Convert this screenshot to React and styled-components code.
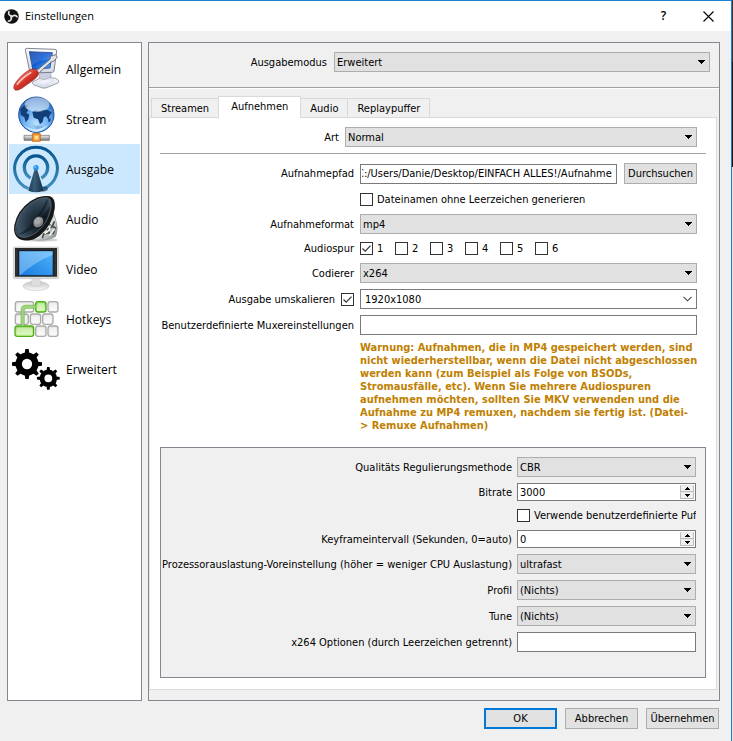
import { useEffect, useRef, useState } from "react";
import styled, { createGlobalStyle, css } from "styled-components";

const GlobalStyle = createGlobalStyle`
  * {
    box-sizing: border-box;
  }

  body {
    margin: 0;
    background: linear-gradient(#33383d 0 62px, #17191c 62px 167px, #e3e3e3 167px);
    color: #000;
    font: 11px/13px "DejaVu Sans Condensed", "DejaVu Sans", sans-serif;
  }

  button,
  input,
  select {
    margin: 0;
    border-radius: 0;
    color: inherit;
    font: inherit;
  }
`;

const Window = styled.div`
  display: flex;
  flex-direction: column;
  min-height: 100vh;
  margin-right: 1px;
  border-top: 1px solid #1c80d0;
  border-right: 1px solid #1c80d0;
  background: #f0f0f0;
`;

const TitleBar = styled.header`
  display: flex;
  align-items: center;
  height: 30px;
  padding-left: 4px;
  background: #fff;
`;

const Title = styled.h1`
  flex: 1;
  margin: 0 0 0 6px;
  font: 11px/16px "Open Sans", sans-serif;
`;

const TitleButton = styled.button`
  display: grid;
  place-items: center;
  width: 45px;
  height: 30px;
  padding: 0;
  border: 0;
  background: none;
  font: 600 12px/16px "Open Sans", sans-serif;
`;

const Body = styled.div`
  display: flex;
  flex: 1;
  gap: 6px;
  padding: 11px 11px 0 7px;
`;

const Sidebar = styled.nav`
  flex: 0 0 135px;
  padding: 1px;
  border: 1px solid #828790;
  background: #fff;
`;

const SidebarItem = styled.button`
  display: flex;
  align-items: center;
  gap: 6px;
  width: 100%;
  height: 50px;
  padding: 0 3px;
  border: 0;
  background: ${(props) => (props.$active ? "#cce8ff" : "none")};
  font: 12px/16px "Open Sans", sans-serif;
  text-align: left;

  svg {
    flex: none;
    width: 48px;
    height: 48px;
  }
`;

const SidebarText = styled.span`
  padding-top: 2px;
`;

const Content = styled.main`
  display: flex;
  flex: 1;
  flex-direction: column;
  min-width: 0;
  padding-bottom: 10px;
  border: 1px solid #828790;
`;

const ModeRow = styled.div`
  display: grid;
  grid-template-columns: 178px 1fr;
  align-items: center;
  gap: 7px;
  padding: 9px 9px 15px 0;
  border-bottom: 1px solid #a0a0a0;
  box-shadow: 0 1px #fff;
`;

const Tabs = styled.div`
  display: flex;
  align-items: flex-end;
  padding: 8px 0 0 2px;
`;

const Tab = styled.button`
  height: 19px;
  margin-left: -1px;
  padding: 0 9px;
  border: 1px solid #d9d9d9;
  border-bottom: 0;
  background: #f0f0f0;

  &:first-child {
    margin-left: 0;
  }

  ${(props) =>
    props.$active &&
    css`
      z-index: 1;
      height: 22px;
      margin-bottom: -1px;
      padding: 0 12px 2px;
      background: #fff;
    `}
`;

const Panel = styled.section`
  flex: 1;
  margin-right: 2px;
  padding: 9px 10px 11px;
  border: 1px solid #d9d9d9;
  border-left-color: #e4e4e4;
  background: #fff;
`;

const ArtRow = styled.div`
  display: grid;
  grid-template-columns: 179px 1fr;
  align-items: center;
  gap: 6px;
  margin-right: 9px;
  padding-bottom: 6px;
`;

const Divider = styled.hr`
  height: 1px;
  margin: 0;
  border: 0;
  background: #a0a0a0;
`;

const Form = styled.div`
  display: grid;
  grid-template-columns: 194px 1fr;
  gap: 6px;
  padding: 9px 9px 15px 0;
`;

const EncoderBox = styled.div`
  display: grid;
  grid-template-columns: 350px minmax(0, 1fr);
  gap: 6px 5px;
  padding: 9px 9px 25px 1px;
  border: 1px solid #828790;
  background: #f0f0f0;
`;

const Label = styled.label`
  align-self: center;
  text-align: right;
  white-space: nowrap;
`;

const LabelGroup = styled.div`
  display: flex;
  align-items: center;
  justify-content: flex-end;
  gap: 6px;
`;

const Field = styled.div`
  display: flex;
  grid-column: 2;
  align-items: center;
  gap: ${(props) => props.$gap || 7}px;
  min-width: 0;
  height: ${(props) => props.$height || 20}px;
  overflow: hidden;
`;

const TextInput = styled.input`
  flex: 1;
  width: 100%;
  min-width: 0;
  height: 20px;
  padding: 0 4px 0 1px;
  border: 1px solid #7a7a7a;
  background: #fff;
  outline: none;
`;

const SelectFrame = styled.div`
  display: grid;
  align-items: center;
  min-width: 0;

  > * {
    grid-area: 1 / 1;
  }

  > svg {
    justify-self: end;
    margin-right: 5px;
    pointer-events: none;
  }
`;

const NativeSelect = styled.select`
  width: 100%;
  height: 20px;
  padding: 0 20px 0 ${(props) => (props.$editable ? 4 : 2)}px;
  border: 1px solid ${(props) => (props.$editable ? "#7a7a7a" : "#adadad")};
  background: ${(props) => (props.$editable ? "#fff" : "#e1e1e1")};
  appearance: none;
  outline: none;
`;

const CheckFrame = styled.span`
  display: inline-grid;
  flex: none;
  width: 13px;
  height: 13px;

  > * {
    grid-area: 1 / 1;
  }

  svg {
    visibility: hidden;
    pointer-events: none;
  }

  input:checked + svg {
    visibility: visible;
  }
`;

const CheckInput = styled.input`
  width: 13px;
  height: 13px;
  border: 1px solid #333;
  background: #fff;
  appearance: none;
`;

const CheckLabel = styled.label`
  display: flex;
  flex: none;
  align-items: center;
  gap: 4px;
  min-width: ${(props) => props.$width || 0}px;
  white-space: nowrap;
`;

const Button = styled.button`
  min-width: 73px;
  height: 21px;
  padding: 0 3px;
  border: ${(props) => (props.$primary ? "2px solid #0078d7" : "1px solid #adadad")};
  background: #e1e1e1;
  white-space: nowrap;
`;

const SpinFrame = styled.div`
  display: flex;
  align-items: center;
  height: 18px;
  padding-right: 1px;
  border: 1px solid #7a7a7a;
  background: #fff;
`;

const SpinInput = styled.input`
  flex: 1;
  min-width: 0;
  height: 16px;
  padding: 0 2px;
  border: 0;
  background: none;
  outline: none;
  appearance: textfield;

  &::-webkit-inner-spin-button {
    display: none;
  }
`;

const SpinButtons = styled.div`
  display: flex;
  flex-direction: column;
`;

const SpinButton = styled.button`
  display: grid;
  place-items: center;
  width: 14px;
  height: 7px;
  padding: 0;
  border: 1px solid #bcbcbc;
  border-top-color: #e8e8e8;
  background: #f0f0f0;
`;

const Warning = styled.p`
  grid-column: 2;
  margin: 0 -4px 0 0;
  color: #c08000;
  font-weight: bold;
`;

const Footer = styled.footer`
  display: flex;
  justify-content: flex-end;
  gap: 8px;
  padding: 7px 12px 12px;
`;

const LogoIcon = () => (
  <svg width="15" height="15" viewBox="0 0 30 30" aria-hidden="true">
    <circle cx="15" cy="15" r="14.5" fill="#111" />
    <g fill="none" stroke="#e6e6e6" strokeWidth="3.2" strokeLinecap="round">
      <path d="M10 5c-2 4 0 8 5 9" />
      <path d="M10 5c-2 4 0 8 5 9" transform="rotate(120 15 15)" />
      <path d="M10 5c-2 4 0 8 5 9" transform="rotate(240 15 15)" />
    </g>
    <circle cx="15" cy="15" r="2" fill="#e6e6e6" />
  </svg>
);

const CloseIcon = () => (
  <svg width="11" height="11" viewBox="0 0 11 11" aria-hidden="true">
    <path d="M.5.5l10 10M10.5.5l-10 10" stroke="#000" strokeWidth="1.1" />
  </svg>
);

const ArrowIcon = () => (
  <svg width="7" height="4" viewBox="0 0 7 4" shapeRendering="crispEdges" aria-hidden="true">
    <path d="M0 0h7v1H6v1H5v1H4v1H3V3H2V2H1V1H0z" />
  </svg>
);

const ChevronIcon = () => (
  <svg width="9" height="6" viewBox="0 0 9 6" aria-hidden="true">
    <path d="M.5.8l4 4 4-4" fill="none" stroke="#444" strokeWidth="1.1" />
  </svg>
);

const CheckIcon = () => (
  <svg width="13" height="13" viewBox="0 0 13 13" aria-hidden="true">
    <path d="M2.5 6.5l2.7 2.7 5.3-5.6" fill="none" stroke="#333" strokeWidth="1.2" />
  </svg>
);

const SpinArrow = ({ down }) => (
  <svg width="5" height="3" viewBox="0 0 5 3" shapeRendering="crispEdges" aria-hidden="true">
    <path d={down ? "M0 0h5v1H4v1H3v1H2V2H1V1H0z" : "M2 0h1v1h1v1h1v1H0V2h1V1h1z"} />
  </svg>
);

const GeneralIcon = () => (
  <svg viewBox="0 0 144 144" aria-hidden="true">
    <defs>
      <linearGradient id="gen-screen" x1="0" y1="0" x2="1" y2="1">
        <stop offset="0" stopColor="#0b3fa6" />
        <stop offset=".45" stopColor="#0a55cf" />
        <stop offset="1" stopColor="#57b3f7" />
      </linearGradient>
      <linearGradient id="gen-case" x1="0" y1="0" x2="0" y2="1">
        <stop offset="0" stopColor="#fafbff" />
        <stop offset="1" stopColor="#d3d8e4" />
      </linearGradient>
      <linearGradient id="gen-handle" x1="0" y1="0" x2="1" y2="1">
        <stop offset=".2" stopColor="#f58a80" />
        <stop offset=".5" stopColor="#d3352b" />
        <stop offset="1" stopColor="#8e100c" />
      </linearGradient>
    </defs>
    <path d="M62 110l30-14 38 4q14 5 8 14l-34 14q-8 3-16 0l-24-9q-6-4-2-9z" fill="url(#gen-case)" stroke="#777c88" strokeWidth="2" />
    <path d="M70 113l26-11 30 4-28 14z" fill="#eef1fa" stroke="#c3c9d8" />
    <path d="M84 78l30-2 4 20-22 8-14-4z" fill="#c9cfde" stroke="#8b909e" strokeWidth="1.5" />
    <path d="M40 15q0-5 5-5l83 3q6 0 6 5l-8 60q-1 4-5 4l-62 2q-5 0-6-5z" fill="url(#gen-case)" stroke="#686d7b" strokeWidth="2.5" />
    <path d="M52 20l69 3-7 46-52 4z" fill="url(#gen-screen)" stroke="#0a2c72" strokeWidth="2" />
    <path d="M53 21l67 3-3 18q-35 2-58 20z" fill="#fff" opacity=".15" />
    <path d="M70 80l44-37 2-9 14-5 6 7-10 12-9 3-41 37z" fill="#e0e3e9" stroke="#5e626d" strokeWidth="2.5" />
    <path d="M8 118q-6 12 2 17 9 2 19-5l38-27q9-8 12-14l-1-8q-4-9-12-9l-12 2q-28 15-46 44z" fill="url(#gen-handle)" stroke="#8d1712" strokeWidth="2" />
    <path d="M16 117q18-22 40-34" fill="none" stroke="#ffc3ba" strokeWidth="5" strokeLinecap="round" />
  </svg>
);

const StreamIcon = () => (
  <svg viewBox="0 0 144 144" aria-hidden="true">
    <defs>
      <radialGradient id="str-globe" cx=".5" cy=".75" r=".75">
        <stop offset="0" stopColor="#b9e0ff" />
        <stop offset=".5" stopColor="#68acef" />
        <stop offset="1" stopColor="#1c5cb4" />
      </radialGradient>
      <linearGradient id="str-pipe" x1="0" y1="0" x2="0" y2="1">
        <stop offset="0" stopColor="#f4f4f4" />
        <stop offset="1" stopColor="#777" />
      </linearGradient>
    </defs>
    <path d="M66 100h16v22H66z" fill="#b9b9b9" stroke="#777" />
    <path d="M36 121h76v15H36z" fill="url(#str-pipe)" stroke="#666" strokeWidth="2" />
    <path d="M61 116h24v23H61z" fill="#f59b33" stroke="#b75b0a" strokeWidth="2" />
    <path d="M68 122h11v11H68z" fill="#ffe59a" />
    <circle cx="73" cy="59" r="53" fill="url(#str-globe)" stroke="#184f9d" strokeWidth="3" />
    <g fill="#113f79">
      <path d="M25 41l14-12 9 1-5 9 6 6-6 8 9 6-3 14-8 9-4-15-11-8z" />
      <path d="M61 51l8-5 15 3 9-5 14 1 13 8-7 7-3 14-8-10-7 3-3 14-8 7-6-15-13-5z" />
      <path d="M109 72l7-2-1 9-6 3z" />
      <path d="M60 90l10 3 17-1 6 4-18 7z" opacity=".2" />
    </g>
    <ellipse cx="75" cy="29" rx="37" ry="22" fill="#fff" opacity=".5" />
    <path d="M36 89q37 29 74-1-37 45-74 1z" fill="#e2f4ff" opacity=".8" />
  </svg>
);

const OutputIcon = () => (
  <svg viewBox="0 0 144 144" aria-hidden="true">
    <defs>
      <linearGradient id="out-ring" x1="0" y1="0" x2="0" y2="1">
        <stop offset="0" stopColor="#07558f" />
        <stop offset="1" stopColor="#438fbd" />
      </linearGradient>
      <linearGradient id="out-cone" x1="0" y1="0" x2="1" y2="0">
        <stop offset="0" stopColor="#1c3a53" />
        <stop offset=".4" stopColor="#385c78" />
        <stop offset="1" stopColor="#142f45" />
      </linearGradient>
    </defs>
    <g fill="none" stroke="url(#out-ring)">
      <path d="M50 131A64 64 0 1 1 94 131" strokeWidth="9" />
      <path d="M56 99A35 35 0 1 1 88 99" strokeWidth="10" />
    </g>
    <path d="M89 125q18-2 19 6 0 7-17 9z" fill="#173e59" opacity=".7" />
    <path d="M67 75h9l19 62q-24 9-46 0z" fill="url(#out-cone)" />
    <circle cx="72" cy="68" r="8" fill="#2593e8" />
    <circle cx="70" cy="66" r="3" fill="#70c5ff" />
  </svg>
);

const AudioIcon = () => (
  <svg viewBox="0 0 144 144" aria-hidden="true">
    <defs>
      <linearGradient id="aud-metal" x1="0" y1="0" x2="1" y2="1">
        <stop offset="0" stopColor="#444" />
        <stop offset=".55" stopColor="#e3e6e6" />
        <stop offset="1" stopColor="#7b8080" />
      </linearGradient>
      <radialGradient id="aud-cone" cx=".7" cy=".65" r=".8">
        <stop offset="0" stopColor="#0b1219" />
        <stop offset=".45" stopColor="#263744" />
        <stop offset=".8" stopColor="#3d5365" />
        <stop offset="1" stopColor="#16212a" />
      </radialGradient>
    </defs>
    <ellipse cx="87" cy="135" rx="50" ry="5" fill="#777" opacity=".35" />
    <path d="M124 53l9 29q6 20-2 42-26 17-76 9l40-42z" fill="url(#aud-metal)" stroke="#858989" strokeWidth="2" />
    <path d="M112 88l7 8-13 7 6 11-17 3-4 13M127 79l-6 15 9 5-7 19" fill="none" stroke="#45504e" strokeWidth="5" />
    <path d="M115 91l-4 15-13 10M129 101l-17 21" fill="none" stroke="#fff" strokeWidth="4" />
    <path d="M108 3q24 1 20 39-7 49-45 80-30 22-60 11Q2 121 7 91 15 47 55 19 80 2 108 3z" fill="#151719" />
    <path d="M106 8q16 4 10 36-9 40-41 67-30 22-50 14Q7 121 12 91 21 49 57 24 82 7 106 8z" fill="url(#aud-cone)" stroke="#667078" strokeWidth="2" />
    <path d="M105 12q11 9-26 57 14-3 35-35-4 36-29 61l-15 2Q39 120 20 118 73 86 105 12z" fill="#050b12" opacity=".4" />
    <ellipse cx="79" cy="81" rx="14" ry="17" fill="#858789" transform="rotate(35 79 81)" />
    <ellipse cx="77" cy="78" rx="9" ry="12" fill="#a7a7a7" transform="rotate(35 77 78)" />
  </svg>
);

const VideoIcon = () => (
  <svg viewBox="0 0 144 144" aria-hidden="true">
    <defs>
      <linearGradient id="vid-screen" x1="1" y1="0" x2="0" y2="1">
        <stop offset="0" stopColor="#4fb4f6" />
        <stop offset="1" stopColor="#1979e0" />
      </linearGradient>
      <linearGradient id="vid-stand" x1="0" y1="0" x2="0" y2="1">
        <stop offset="0" stopColor="#c6c6c6" />
        <stop offset="1" stopColor="#f8f8f8" />
      </linearGradient>
    </defs>
    <ellipse cx="72" cy="123" rx="39" ry="14" fill="url(#vid-stand)" stroke="#ccc" strokeWidth="2" />
    <path d="M60 100h24l3 21q-15 6-30 0z" fill="#dedede" stroke="#bbb" />
    <path d="M7 6h130q3 0 3 4v87q0 4-4 4H8q-4 0-4-4V10q0-4 3-4z" fill="#d8d8d8" stroke="#c7c7c7" strokeWidth="2" />
    <path d="M9 9h126v86H9z" fill="#292b2d" />
    <path d="M19 16h105v77H19z" fill="#111d2b" />
    <path d="M22 19h100v72H22z" fill="url(#vid-screen)" />
    <path d="M22 19h100v11Q72 48 24 91h-2z" fill="#c1e7ff" opacity=".4" />
    <path d="M13 17v67M130 17v67" stroke="#77797a" strokeDasharray="2 3" />
  </svg>
);

const hotkeys = [
  [10, 20, 55], [71, 20, 31, true], [108, 20, 30],
  [10, 57, 39], [55, 57, 31], [92, 57, 31],
  [9, 93, 56, true], [71, 93, 31], [108, 93, 30],
];

const HotkeysIcon = () => (
  <svg viewBox="0 0 144 144" aria-hidden="true">
    <defs>
      <linearGradient id="key-gray" x1="0" y1="0" x2="0" y2="1">
        <stop offset="0" stopColor="#e4e4e4" />
        <stop offset="1" stopColor="#fafafa" />
      </linearGradient>
      <linearGradient id="key-green" x1="0" y1="0" x2="0" y2="1">
        <stop offset="0" stopColor="#97d862" />
        <stop offset="1" stopColor="#d4f9aa" />
      </linearGradient>
    </defs>
    {hotkeys.map(([x, y, width, active]) => (
      <g key={x + "-" + y}>
        <rect x={x} y={y} width={width} height="31" rx="7" fill={active ? "url(#key-green)" : "url(#key-gray)"} stroke={active ? "#4dad1d" : "#ababab"} strokeWidth="4" />
        <rect x={x + 5} y={y + 5} width={width - 10} height="20" rx="4" fill="#fff" opacity=".4" />
      </g>
    ))}
    <path d="M71 35H43q-11 0-11 11v47" fill="none" stroke="#74bd49" strokeWidth="12" opacity=".85" />
    <path d="M71 35H43q-11 0-11 11v47" fill="none" stroke="#a3d488" strokeWidth="6" />
  </svg>
);

const Gear = ({ cx, cy, size }) => (
  <g transform={`translate(${cx} ${cy}) scale(${size})`}>
    <circle r="25" fill="none" stroke="#000" strokeWidth="19" />
    {[0, 45, 90, 135, 180, 225, 270, 315].map((angle) => (
      <path key={angle} d="M-7-32l2-13H5l2 13z" transform={`rotate(${angle})`} />
    ))}
  </g>
);

const AdvancedIcon = () => (
  <svg viewBox="0 0 144 144" aria-hidden="true">
    <Gear cx="45" cy="57" size="1" />
    <Gear cx="109" cy="100" size=".76" />
  </svg>
);

const sections = [
  ["Allgemein", GeneralIcon],
  ["Stream", StreamIcon],
  ["Ausgabe", OutputIcon],
  ["Audio", AudioIcon],
  ["Video", VideoIcon],
  ["Hotkeys", HotkeysIcon],
  ["Erweitert", AdvancedIcon],
];

const tabs = ["Streamen", "Aufnehmen", "Audio", "Replaypuffer"];

function Select({ id, label, options, editable }) {
  return (
    <SelectFrame>
      <NativeSelect id={id} aria-label={label} $editable={editable}>
        {options.map((option) => (
          <option key={option}>{option}</option>
        ))}
      </NativeSelect>
      {editable ? <ChevronIcon /> : <ArrowIcon />}
    </SelectFrame>
  );
}

function Checkbox({ id, defaultChecked }) {
  return (
    <CheckFrame>
      <CheckInput type="checkbox" id={id} defaultChecked={defaultChecked} />
      <CheckIcon />
    </CheckFrame>
  );
}

function NumberField({ id, initial, step = 1 }) {
  const [value, setValue] = useState(initial);

  return (
    <SpinFrame>
      <SpinInput type="number" id={id} value={value} onChange={(e) => setValue(e.target.value)} />
      <SpinButtons>
        <SpinButton type="button" aria-label="Erhöhen" onClick={() => setValue(Number(value) + step)}>
          <SpinArrow />
        </SpinButton>
        <SpinButton type="button" aria-label="Verringern" onClick={() => setValue(Number(value) - step)}>
          <SpinArrow down />
        </SpinButton>
      </SpinButtons>
    </SpinFrame>
  );
}

function PathInput({ id, value }) {
  const ref = useRef(null);

  // long paths show their end, like the folder name
  useEffect(() => {
    ref.current.scrollLeft = ref.current.scrollWidth;
  }, []);

  return <TextInput ref={ref} id={id} defaultValue={value} />;
}

function RecordingForm() {
  return (
    <Form>
      <Label htmlFor="path">Aufnahmepfad</Label>
      <Field $height={21}>
        <PathInput id="path" value="C:/Users/Danie/Desktop/EINFACH ALLES!/Aufnahme" />
        <Button type="button">Durchsuchen</Button>
      </Field>

      <Field $height={18}>
        <CheckLabel>
          <Checkbox />
          Dateinamen ohne Leerzeichen generieren
        </CheckLabel>
      </Field>

      <Label htmlFor="format">Aufnahmeformat</Label>
      <Select id="format" options={["mp4", "mkv", "flv"]} />

      <Label as="span">Audiospur</Label>
      <Field $height={17} $gap={1}>
        {[1, 2, 3, 4, 5, 6].map((track) => (
          <CheckLabel key={track} $width={34}>
            <Checkbox defaultChecked={track === 1} />
            {track}
          </CheckLabel>
        ))}
      </Field>

      <Label htmlFor="encoder">Codierer</Label>
      <Select id="encoder" options={["x264"]} />

      <LabelGroup>
        <Label htmlFor="rescale">Ausgabe umskalieren</Label>
        <Checkbox id="rescale" defaultChecked />
      </LabelGroup>
      <Select id="resolution" label="Auflösung" options={["1920x1080", "1280x720"]} editable />

      <Label htmlFor="muxer">Benutzerdefinierte Muxereinstellungen</Label>
      <TextInput id="muxer" />

      <Warning>
        Warnung: Aufnahmen, die in MP4 gespeichert werden, sind nicht wiederherstellbar, wenn die Datei nicht
        abgeschlossen werden kann (zum Beispiel als Folge von BSODs, Stromausfälle, etc). Wenn Sie mehrere
        Audiospuren aufnehmen möchten, sollten Sie MKV verwenden und die Aufnahme zu MP4 remuxen, nachdem sie
        fertig ist. (Datei-
        <br />
        &gt; Remuxe Aufnahmen)
      </Warning>
    </Form>
  );
}

function EncoderSettings() {
  return (
    <EncoderBox>
      <Label htmlFor="rate">Qualitäts Regulierungsmethode</Label>
      <Select id="rate" options={["CBR", "VBR", "CRF"]} />

      <Label htmlFor="bitrate">Bitrate</Label>
      <NumberField id="bitrate" initial={3000} step={50} />

      <Field $height={17}>
        <CheckLabel>
          <Checkbox />
          Verwende benutzerdefinierte Puff
        </CheckLabel>
      </Field>

      <Label htmlFor="keyframe">Keyframeintervall (Sekunden, 0=auto)</Label>
      <NumberField id="keyframe" initial={0} />

      <Label htmlFor="preset">Prozessorauslastung-Voreinstellung (höher = weniger CPU Auslastung)</Label>
      <Select id="preset" options={["ultrafast", "veryfast", "fast"]} />

      <Label htmlFor="profile">Profil</Label>
      <Select id="profile" options={["(Nichts)", "main", "high"]} />

      <Label htmlFor="tune">Tune</Label>
      <Select id="tune" options={["(Nichts)", "film"]} />

      <Label htmlFor="x264">x264 Optionen (durch Leerzeichen getrennt)</Label>
      <TextInput id="x264" />
    </EncoderBox>
  );
}

export default function App() {
  const [section, setSection] = useState("Ausgabe");
  const [tab, setTab] = useState("Aufnehmen");

  return (
    <>
      <GlobalStyle />
      <Window>
        <TitleBar>
          <LogoIcon />
          <Title>Einstellungen</Title>
          <TitleButton aria-label="Hilfe">?</TitleButton>
          <TitleButton aria-label="Schließen">
            <CloseIcon />
          </TitleButton>
        </TitleBar>

        <Body>
          <Sidebar>
            {sections.map(([name, Icon]) => (
              <SidebarItem key={name} $active={name === section} onClick={() => setSection(name)}>
                <Icon />
                <SidebarText>{name}</SidebarText>
              </SidebarItem>
            ))}
          </Sidebar>

          <Content>
            <ModeRow>
              <Label htmlFor="mode">Ausgabemodus</Label>
              <Select id="mode" options={["Erweitert", "Einfach"]} />
            </ModeRow>

            <Tabs role="tablist">
              {tabs.map((name) => (
                <Tab key={name} role="tab" aria-selected={name === tab} $active={name === tab} onClick={() => setTab(name)}>
                  {name}
                </Tab>
              ))}
            </Tabs>

            <Panel>
              <ArtRow>
                <Label htmlFor="type">Art</Label>
                <Select id="type" options={["Normal"]} />
              </ArtRow>
              <Divider />
              <RecordingForm />
              <EncoderSettings />
            </Panel>
          </Content>
        </Body>

        <Footer>
          <Button $primary>OK</Button>
          <Button>Abbrechen</Button>
          <Button>Übernehmen</Button>
        </Footer>
      </Window>
    </>
  );
}
